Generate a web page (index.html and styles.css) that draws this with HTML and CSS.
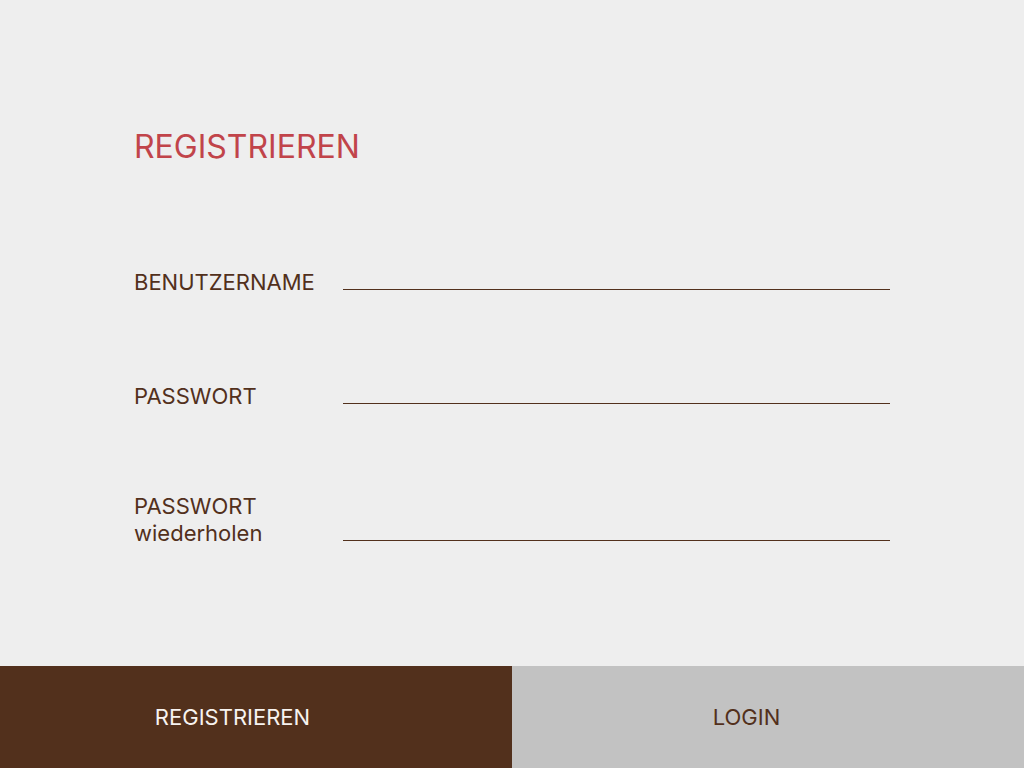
FILE: index.html
```html
<!DOCTYPE html>
<html lang="de">
<head>
<meta charset="utf-8">
<title>Registrieren</title>
<link rel="stylesheet" href="styles.css">
</head>
<body>
<div class="page">
  <main class="content">
    <h1 class="title">REGISTRIEREN</h1>
    <form class="form">
      <div class="row row-first">
        <label class="label">BENUTZERNAME</label>
        <span class="field"></span>
      </div>
      <div class="row row-second">
        <label class="label">PASSWORT</label>
        <span class="field"></span>
      </div>
      <div class="row row-third">
        <label class="label">PASSWORT<br>wiederholen</label>
        <span class="field"></span>
      </div>
    </form>
  </main>
  <footer class="actions">
    <button class="btn btn-primary" type="button">REGISTRIEREN</button>
    <button class="btn btn-secondary" type="button">LOGIN</button>
  </footer>
</div>
</body>
</html>
```
FILE: styles.css
```css
* { box-sizing: border-box; }
html, body { margin: 0; padding: 0; }
body {
  background: #eeeeee;
  font-family: Inter, "Noto Sans", sans-serif;
  color: #52301c;
}
.page {
  height: 768px;
  display: flex;
  flex-direction: column;
}
.content {
  flex: 1;
  padding: 127px 0 0 134px;
}
.title {
  margin: 0;
  font-size: 32px;
  line-height: 39px;
  font-weight: 400;
  color: #c1444a;
}
.form {
  margin-top: 103px;
  display: flex;
  flex-direction: column;
}
.row {
  display: flex;
  align-items: flex-end;
}
.row-second { margin-top: 87px; }
.row-third { margin-top: 83px; }
.label {
  width: 209px;
  font-size: 22px;
  line-height: 27px;
  color: #52301c;
}
.field {
  display: block;
  width: 547px;
  height: 20px;
  border-bottom: 1px solid #52301c;
  margin-bottom: 6px;
}
.actions {
  height: 102px;
  display: grid;
  grid-template-columns: 512px 512px;
}
.btn {
  border: 0;
  margin: 0;
  font-family: Inter, "Noto Sans", sans-serif;
  font-size: 22px;
  cursor: pointer;
}
.btn-primary {
  background: #52301c;
  color: #f7f3f0;
  padding: 0 47px 0 0;
}
.btn-secondary {
  background: #c2c2c2;
  color: #52301c;
  padding: 0 43px 0 0;
}
```
